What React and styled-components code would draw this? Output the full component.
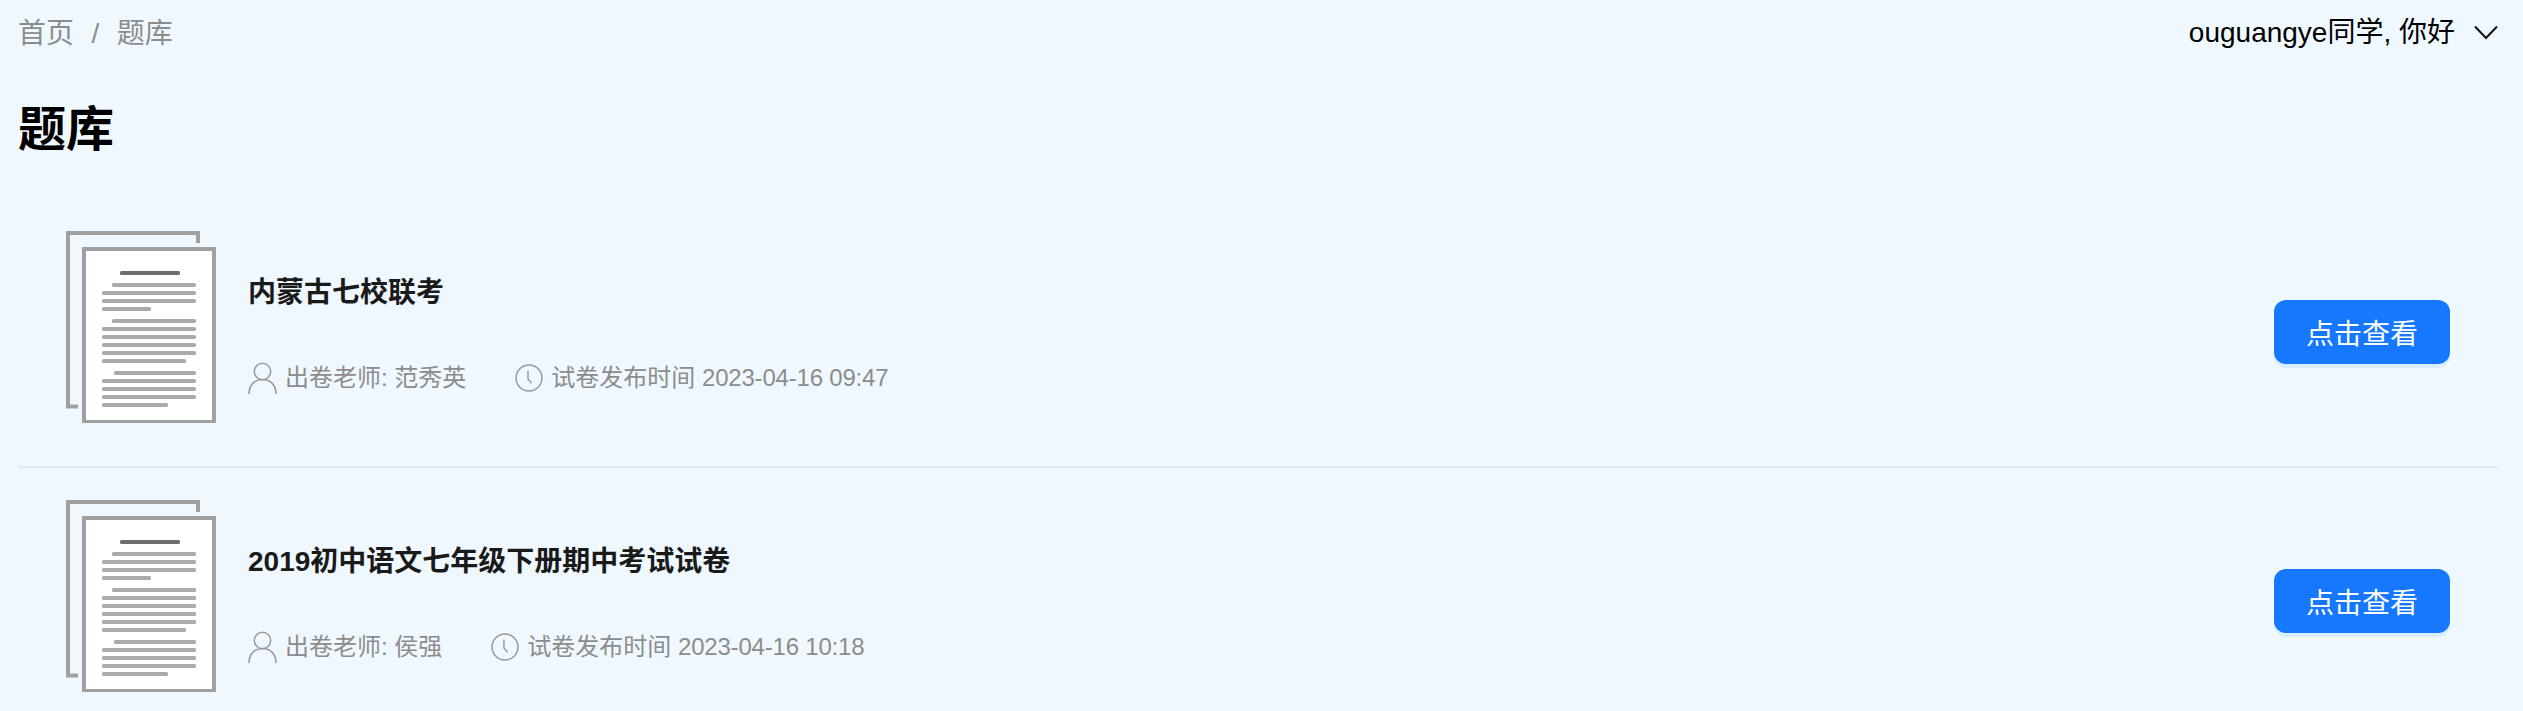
import React from "react";
import styled, { createGlobalStyle } from "styled-components";

const papers = [
  { id: 1, title: "内蒙古七校联考", teacher: "范秀英", time: "2023-04-16 09:47" },
  { id: 2, title: "2019初中语文七年级下册期中考试试卷", teacher: "侯强", time: "2023-04-16 10:18" },
];

const textLines = [
  [46, 54], [36, 62], [36, 70], [36, 78, 85],
  [46, 90], [36, 98], [36, 106], [36, 114], [36, 122], [36, 130, 120],
  [48, 142], [36, 150], [36, 158], [36, 166], [36, 174, 102],
];

const PaperIcon = () => (
  <PaperSvg viewBox="0 0 150 192">
    <path d="M12 175.500H2V2H132V12" fill="none" stroke="#a0a0a0" strokeWidth="4" />
    <rect x="18" y="18" width="130" height="173" fill="#fff" stroke="#a0a0a0" strokeWidth="4" />
    <rect x="54" y="40" width="60" height="4" rx="1.500" fill="#6e6e6e" />
    {textLines.map(([x, y, end = 130]) => (
      <rect key={y} x={x} y={y - 2} width={end - x} height="4" rx="1.500" fill="#aaa" />
    ))}
  </PaperSvg>
);

const UserIcon = () => (
  <UserSvg viewBox="0 0 29 33">
    <circle cx="14.5" cy="9.5" r="8.2" fill="none" stroke="#999" strokeWidth="1.5" />
    <path d="M1 32c0-9 5.5-14.5 13.5-14.5S28 23 28 32" fill="none" stroke="#999" strokeWidth="1.5" />
  </UserSvg>
);

const ClockIcon = () => (
  <ClockSvg viewBox="0 0 27 27">
    <circle cx="13.5" cy="13.5" r="12.5" fill="none" stroke="#999" strokeWidth="1.4" />
    <path d="M12.5 6.5v8l3.5 4" fill="none" stroke="#999" strokeWidth="1.4" />
  </ClockSvg>
);

const PaperItem = ({ paper }) => (
  <Item>
    <PaperIcon />
    <ItemBody>
      <ItemTitle>{paper.title}</ItemTitle>
      <Meta>
        <MetaPart>
          <UserIcon />
          <span>出卷老师: {paper.teacher}</span>
        </MetaPart>
        <MetaPart>
          <ClockIcon />
          <span>
            试卷发布时间 <TimeValue>{paper.time}</TimeValue>
          </span>
        </MetaPart>
      </Meta>
    </ItemBody>
    <ViewButton>点击查看</ViewButton>
  </Item>
);

const App = () => (
  <Page>
    <GlobalStyle />
    <TopBar>
      <Breadcrumb>
        <span>首页</span>
        <Separator>/</Separator>
        <span>题库</span>
      </Breadcrumb>
      <UserMenu>
        ouguangye同学, 你好
        <Chevron viewBox="0 0 24 15">
          <path d="M1 1.5L12 13L23 1.5" fill="none" stroke="#111" strokeWidth="2" />
        </Chevron>
      </UserMenu>
    </TopBar>
    <PageTitle>题库</PageTitle>
    {papers.map((paper) => (
      <PaperItem key={paper.id} paper={paper} />
    ))}
  </Page>
);

const GlobalStyle = createGlobalStyle`
  html, body {
    margin: 0;
    height: 100%;
    overflow: hidden;
    background: #f0f8ff;
  }
  body {
    font-family: "Liberation Sans", "Noto Sans CJK SC", sans-serif;
  }
`;

const Page = styled.div`
  height: 100vh;
  overflow: hidden;
  padding: 0 25px 0 18px;
  background: #f0f8ff;
`;

const TopBar = styled.div`
  display: flex;
  align-items: center;
  justify-content: space-between;
  height: 66px;
`;

const Breadcrumb = styled.div`
  display: flex;
  padding-top: 2px;
  font-size: 28px;
  line-height: 40px;
  color: #8c8c8c;
`;

const Separator = styled.span`
  margin: 0 17.5px;
`;

const UserMenu = styled.div`
  display: flex;
  align-items: center;
  gap: 19px;
  font-size: 28px;
  line-height: 40px;
  color: #000;
`;

const Chevron = styled.svg`
  width: 24px;
  height: 15px;
  margin-top: -2px;
`;

const PageTitle = styled.h1`
  margin: 32px 0 37px;
  font-size: 48px;
  line-height: 64px;
  font-weight: 700;
  color: #000;
`;

const Item = styled.div`
  display: flex;
  align-items: flex-start;
  padding: 32px 48px 43px;
  border-bottom: 2px solid #e2e9f1;
`;

const PaperSvg = styled.svg`
  flex: none;
  width: 150px;
  height: 192px;
`;

const ItemBody = styled.div`
  flex: 1;
  min-width: 0;
  margin-left: 32px;
  padding-top: 42px;
`;

const ItemTitle = styled.div`
  font-size: 28px;
  line-height: 40px;
  font-weight: 700;
  color: #1a1a1a;
`;

const Meta = styled.div`
  display: flex;
  gap: 49px;
  margin-top: 45px;
`;

const MetaPart = styled.div`
  display: flex;
  align-items: center;
  font-size: 24px;
  line-height: 40px;
  color: #8c8c8c;
`;

const TimeValue = styled.span`
  letter-spacing: -0.2px;
`;

const UserSvg = styled.svg`
  width: 29px;
  height: 33px;
  margin-right: 8px;
`;

const ClockSvg = styled.svg`
  width: 28px;
  height: 28px;
  margin-right: 8px;
`;

const ViewButton = styled.button`
  flex: none;
  width: 176px;
  height: 64px;
  margin-top: 69px;
  border: none;
  border-radius: 12px;
  background: #1677ff;
  box-shadow: 0 4px 0 rgba(5, 145, 255, 0.1);
  color: #fff;
  font-family: inherit;
  font-size: 28px;
`;

export default App;
